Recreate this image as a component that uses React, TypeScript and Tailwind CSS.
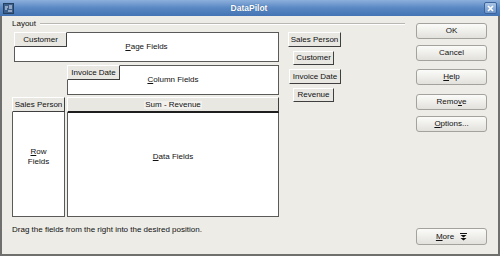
const FONT = { fontFamily: '"Liberation Sans", Arial, sans-serif' };

const raised =
  "border border-t-white border-l-white border-r-[#3f3f3f] border-b-[#3f3f3f] bg-[#e8e7e2]";

function Tab({ label, className }: { label: string; className: string }) {
  return (
    <div
      className={[
        "absolute -left-px -top-px flex items-center justify-center leading-none text-[8px] text-[#111]",
        raised,
        className,
      ].join(" ")}
    >
      {label}
    </div>
  );
}

function DlgButton({ children, className = "" }: { children: React.ReactNode; className?: string }) {
  return (
    <div
      className={[
        "flex w-[71px] items-center justify-center rounded-[3px] border border-[#a3a29c] bg-linear-to-b from-[#fbfbf9] to-[#e2e1dc] text-[8px] leading-none text-[#111]",
        className,
      ].join(" ")}
    >
      {children}
    </div>
  );
}

function AppIcon() {
  return (
    <svg width="11" height="11" viewBox="0 0 11 11">
      <rect x="0.5" y="0.5" width="10" height="10" fill="#3d5f8c" stroke="#24415f" />
      <path d="M2 4h3M2 6h2M6 3l3 0M6 5h3M5 8h4" stroke="#e8f0fa" strokeWidth="1" />
    </svg>
  );
}

function MoreArrows() {
  return (
    <svg width="7" height="8" viewBox="0 0 7 8">
      <path d="M0 0.5h7" stroke="#111" strokeWidth="1" />
      <path d="M0.5 2h6L3.5 4.5z" fill="#111" />
      <path d="M0.5 5h6L3.5 7.5z" fill="#111" />
    </svg>
  );
}

export default function App() {
  return (
    <div className="flex h-[256px] w-[500px] flex-col" style={FONT}>
      {/* title bar */}
      <div className="relative flex h-[16px] items-center bg-linear-to-b from-[#8db0dc] via-[#5987c3] to-[#4474b4] px-[3px]">
        <AppIcon />
        <div className="flex-1 text-center text-[8.5px] font-bold leading-none text-white [text-shadow:0_0_1px_#2a4f80]">
          DataPilot
        </div>
        <div className="flex h-[12px] w-[13px] items-center justify-center rounded-[2px] border border-[#3c649b] bg-linear-to-b from-[#a9c4e6] to-[#6e96cb]">
          <svg width="7" height="7" viewBox="0 0 7 7">
            <path d="M1 1l5 5M6 1L1 6" stroke="white" strokeWidth="1.6" />
          </svg>
        </div>
      </div>

      {/* body */}
      <div className="flex flex-1 flex-col border-x-2 border-b-2 border-[#6f6f6d] bg-[#edece7] pl-[10px] pr-[11px] pt-[3px] pb-[9px] text-[#111]">
        <div className="flex items-start">
          <div className="flex w-[393px] flex-col">
            <div className="flex h-[10px] items-center">
              <span className="text-[8px] leading-[10px]">Layout</span>
              <div className="ml-[4px] h-[2px] flex-1 border-t border-b border-t-[#b8b7b1] border-b-white" />
            </div>

            <div className="mt-[3px] flex items-start">
              {/* fields area */}
              <div className="flex w-[267px] flex-col">
                <div className="relative ml-[2px] flex h-[30px] w-[265px] items-center justify-center border border-[#5a5a58] bg-white text-[8px] leading-none">
                  <Tab label="Customer" className="h-[15px] w-[53px]" />
                  <span>
                    <span className="underline">P</span>age Fields
                  </span>
                </div>

                <div className="relative ml-[55px] mt-[3px] flex h-[30px] w-[212px] items-center justify-center border border-[#5a5a58] bg-white text-[8px] leading-none">
                  <Tab label="Invoice Date" className="h-[15px] w-[53px]" />
                  <span>
                    <span className="underline">C</span>olumn Fields
                  </span>
                </div>

                <div className="mt-[2px] flex h-[120px] gap-[2px]">
                  <div className="relative flex w-[53px] flex-col items-center justify-center border border-[#5a5a58] bg-white text-center text-[8px] leading-[10px]">
                    <Tab label="Sales Person" className="h-[15px] w-[53px]" />
                    <span>
                      <span className="underline">R</span>ow
                    </span>
                    <span>Fields</span>
                  </div>
                  <div className="relative flex w-[212px] items-center justify-center border border-[#5a5a58] bg-white text-[8px] leading-none">
                    <div className="absolute -left-px -right-px -top-px flex h-[16px] items-center justify-center border border-b-2 border-t-white border-l-white border-r-[#3f3f3f] border-b-[#1e1e1e] bg-[#e8e7e2]">
                      <span className="bg-[#f1f0ec] px-px">Sum - Revenue</span>
                    </div>
                    <span>
                      <span className="underline">D</span>ata Fields
                    </span>
                  </div>
                </div>
              </div>

              {/* available fields */}
              <div className="ml-[9px] flex flex-col items-start text-[8px] leading-none">
                <div className={["flex h-[15px] w-[53px] items-center justify-center", raised].join(" ")}>
                  Sales Person
                </div>
                <div className={["ml-[5px] mt-[4px] flex h-[14px] w-[41px] items-center justify-center", raised].join(" ")}>
                  Customer
                </div>
                <div className={["ml-[1px] mt-[4px] flex h-[15px] w-[52px] items-center justify-center", raised].join(" ")}>
                  Invoice Date
                </div>
                <div className={["ml-[5px] mt-[4px] flex h-[14px] w-[41px] items-center justify-center", raised].join(" ")}>
                  Revenue
                </div>
              </div>
            </div>
          </div>

          {/* dialog buttons */}
          <div className="ml-[11px] mt-[4px] flex flex-col">
            <DlgButton className="h-[16px]">OK</DlgButton>
            <DlgButton className="mt-[6px] h-[16px]">Cancel</DlgButton>
            <DlgButton className="mt-[8px] h-[16px]">
              <span className="underline">H</span>elp
            </DlgButton>
            <DlgButton className="mt-[9px] h-[16px]">
              Remo<span className="underline">v</span>e
            </DlgButton>
            <DlgButton className="mt-[6px] h-[16px]">
              <span className="underline">O</span>ptions...
            </DlgButton>
          </div>
        </div>

        <div className="mt-auto flex items-start justify-between">
          <span className="text-[8px] leading-[10px]">
            Drag the fields from the right into the desired position.
          </span>
          <DlgButton className="mt-[3px] h-[17px] gap-[6px]">
            <span>
              <span className="underline">M</span>ore
            </span>
            <MoreArrows />
          </DlgButton>
        </div>
      </div>
    </div>
  );
}
